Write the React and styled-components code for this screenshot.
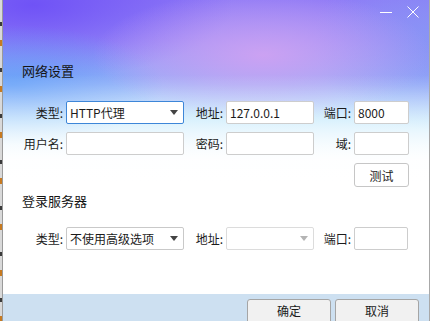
import React from 'react'
import styled, { createGlobalStyle } from 'styled-components'

const GlobalStyle = createGlobalStyle`
  html, body { margin: 0; padding: 0; }
  body {
    font-family: "Noto Sans CJK SC", "Noto Sans", "Liberation Sans", sans-serif;
    font-size: 12px;
    color: #1b1b1b;
  }
`

export default function App() {
  return (
    <>
      <GlobalStyle />
      <Desktop>
        <Strip />
        <Window>
          <TitleBar>
            <svg width="12" height="12" viewBox="0 0 12 12">
              <line x1="0" y1="6.5" x2="12" y2="6.5" stroke="#fff" strokeWidth="1" />
            </svg>
            <svg width="12" height="12" viewBox="0 0 12 12">
              <path d="M0.5 0.5 L11.5 11.5 M11.5 0.5 L0.5 11.5" stroke="#fff" strokeWidth="1" />
            </svg>
          </TitleBar>
          <Body>
            <SectionTitle>网络设置</SectionTitle>
            <FormGrid $top={21}>
              <Label>类型:</Label>
              <Select $focused>
                <span>HTTP代理</span>
                <Arrow />
              </Select>
              <Label>地址:</Label>
              <Field readOnly value="127.0.0.1" />
              <Label>端口:</Label>
              <Field readOnly value="8000" />

              <Label>用户名:</Label>
              <Field readOnly value="" />
              <Label>密码:</Label>
              <Field readOnly value="" />
              <Label>域:</Label>
              <Field readOnly value="" />

              <TestButton>测试</TestButton>
            </FormGrid>

            <SectionTitle $top={6}>登录服务器</SectionTitle>
            <FormGrid $top={17}>
              <Label>类型:</Label>
              <Select>
                <span>不使用高级选项</span>
                <Arrow />
              </Select>
              <Label>地址:</Label>
              <Select $disabled>
                <span />
                <Arrow $disabled />
              </Select>
              <Label>端口:</Label>
              <Field readOnly value="" $narrow />
            </FormGrid>
          </Body>
          <Footer>
            <DialogButton>确定</DialogButton>
            <DialogButton>取消</DialogButton>
          </Footer>
        </Window>
      </Desktop>
    </>
  )
}

function Arrow({ $disabled }) {
  return (
    <svg width="8" height="5" viewBox="0 0 8 5">
      <path d="M0 0 L8 0 L4 5 Z" fill={$disabled ? '#b4b4b4' : '#444'} />
    </svg>
  )
}

const Desktop = styled.div`
  width: 430px;
  height: 321px;
  display: flex;
  overflow: hidden;
`

const Strip = styled.div`
  width: 2px;
  border-right: 1px solid #9a9a9a;
  background:
    repeating-linear-gradient(180deg, #d9d9d9 0 22px, #3a3a3a 22px 26px, #d9d9d9 26px 40px, #c77a20 40px 46px);
`

const Window = styled.div`
  flex: 1;
  display: flex;
  flex-direction: column;
  border-right: 1px solid #a8a8a8;
  background:
    linear-gradient(180deg, rgba(255,255,255,0) 0px, rgba(255,255,255,0) 75px, rgba(255,255,255,0.5) 118px, rgba(255,255,255,0.95) 160px, #fff 185px),
    radial-gradient(ellipse 170px 65px at 260px 55px, rgba(206,162,242,0.95), rgba(206,162,242,0) 100%),
    radial-gradient(ellipse 150px 60px at 10px 85px, rgba(98,160,248,0.9), rgba(98,160,248,0) 100%),
    radial-gradient(ellipse 200px 75px at 30px 5px, rgba(108,78,246,0.9), rgba(108,78,246,0) 100%),
    radial-gradient(ellipse 120px 90px at 430px 40px, rgba(132,150,245,0.8), rgba(132,150,245,0) 100%),
    linear-gradient(180deg, #8f7af6 0px, #9a8ef7 40px, #98b2f8 85px, #b2e2fb 120px, #eaf6fe 160px, #fff 190px);
`

const TitleBar = styled.div`
  height: 28px;
  display: flex;
  justify-content: flex-end;
  align-items: flex-start;
  gap: 15px;
  padding: 6px 10px 0 0;
  box-sizing: border-box;
`

const Body = styled.div`
  flex: 1;
  padding: 34px 0 0 19px;
`

const SectionTitle = styled.div`
  font-size: 13px;
  line-height: 18px;
  margin-top: ${p => p.$top || 0}px;
  color: #151515;
`

const FormGrid = styled.div`
  display: grid;
  grid-template-columns: 44px 118px 42px 88px 40px 55px;
  grid-auto-rows: 23px;
  row-gap: 8px;
  margin-top: ${p => p.$top || 0}px;
`

const Label = styled.div`
  display: flex;
  align-items: center;
  justify-content: flex-end;
  padding-right: 3px;
  white-space: nowrap;
`

const Field = styled.input`
  box-sizing: border-box;
  width: ${p => (p.$narrow ? '54px' : '100%')};
  height: 23px;
  margin: 0;
  border: 1px solid #cdcdcd;
  border-radius: 2px;
  background: #fff;
  padding: 0 3px;
  font: inherit;
  font-size: 12px;
  color: #1b1b1b;
  outline: none;
`

const Select = styled.div`
  box-sizing: border-box;
  height: 23px;
  display: flex;
  align-items: center;
  justify-content: space-between;
  padding: 0 5px 0 3px;
  border: 1px solid ${p => (p.$focused ? '#3d86d8' : p.$disabled ? '#dcdcdc' : '#c9c9c9')};
  border-radius: 2px;
  background: #fff;
  font-size: 12px;
`

const TestButton = styled.button`
  grid-column: 6;
  height: 24px;
  margin: 0;
  border: 1px solid #c6c6c6;
  border-radius: 3px;
  background: #fff;
  font: inherit;
  font-size: 12px;
  color: #1b1b1b;
  padding: 0;
`

const Footer = styled.div`
  height: 27px;
  background: #cde0f1;
  display: flex;
  justify-content: flex-end;
  gap: 4px;
  padding: 5px 10px 0 0;
  box-sizing: border-box;
`

const DialogButton = styled.button`
  width: 84px;
  height: 26px;
  margin: 0;
  border: 1px solid #a5a5a5;
  border-radius: 3px;
  background: #f1f1f1;
  font: inherit;
  font-size: 12px;
  color: #1b1b1b;
  padding: 0 0 4px;
`
